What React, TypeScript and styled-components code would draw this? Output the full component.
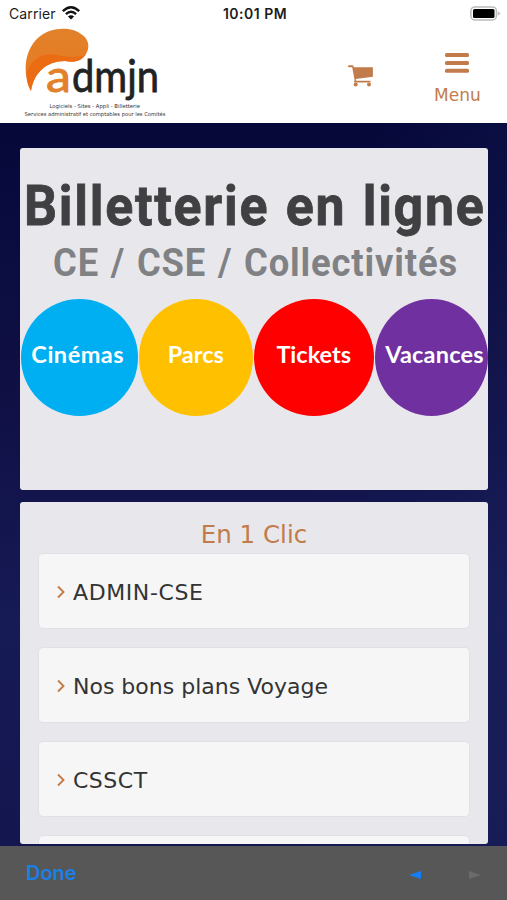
import React from "react";
import styled, { createGlobalStyle } from "styled-components";

const GlobalStyle = createGlobalStyle`
  * { box-sizing: border-box; }
  body { margin: 0; }
`;

const VERDANA = `Verdana, "DejaVu Sans", sans-serif`;
const SYSTEM = `Inter, "Liberation Sans", sans-serif`;
const ACCENT = "#c27c4b";

const Screen = styled.div`
  width: 507px;
  height: 900px;
  display: flex;
  flex-direction: column;
  overflow: hidden;
  font-family: ${VERDANA};
  background: linear-gradient(100deg, rgba(30, 40, 100, 0) 60%, rgba(30, 40, 100, 0.35)),
    linear-gradient(#06083a 120px, #101045 400px, #161a55 620px, #14164f 846px);
`;

const StatusBar = styled.div`
  flex: none;
  height: 28px;
  display: grid;
  grid-template-columns: 1fr auto 1fr;
  align-items: center;
  padding: 0 6px 2px 9px;
  background: #fff;
  font-family: ${SYSTEM};
  font-size: 14px;
  color: #1c1c1c;
`;

const Carrier = styled.div`
  display: flex;
  align-items: center;
  gap: 6px;
  letter-spacing: 0.1px;
`;

const Clock = styled.div`
  font-weight: 600;
  font-size: 14px;
  letter-spacing: 0.5px;
`;

const Battery = styled.div`
  display: flex;
  justify-content: flex-end;
`;

const Header = styled.header`
  flex: none;
  height: 95px;
  display: flex;
  background: #fff;
`;

const Logo = styled.svg`
  flex: none;
  margin-left: 20px;
`;

const CartLink = styled.div`
  margin: 37px 0 0 178px;
  height: 23px;
`;

const MenuButton = styled.div`
  margin: 25px 0 0 60px;
  display: flex;
  flex-direction: column;
  align-items: center;
  gap: 11px;
  color: ${ACCENT};
  font-size: 17px;
  line-height: 22px;
`;

const Content = styled.main`
  flex: none;
  height: 723px;
  padding: 25px 19px 2px 20px;
  display: flex;
  flex-direction: column;
  gap: 12px;
`;

const Panel = styled.section<{ $height: number }>`
  flex: none;
  height: ${(p) => p.$height}px;
  border-radius: 3px;
  background: #e8e8ec;
  overflow: hidden;
`;

const BannerTitle = styled.div`
  width: max-content;
  height: 52px;
  margin: 32px 0 0 4px;
  font: 700 56px/52px Roboto, sans-serif;
  letter-spacing: 1.9px;
  word-spacing: 2px;
  white-space: nowrap;
  color: #404042;
  -webkit-text-stroke: 0.8px #404042;
  transform: scaleX(0.925);
  transform-origin: left;
`;

const BannerSubtitle = styled.div`
  width: max-content;
  height: 40px;
  margin: 11px 0 0 32.5px;
  font: 700 38.5px/40px Roboto, sans-serif;
  letter-spacing: 0.9px;
  word-spacing: 2px;
  white-space: nowrap;
  color: #808184;
  transform: scaleX(0.945);
  transform-origin: left;
`;

const Themes = styled.div`
  display: flex;
  gap: 1px;
  margin: 16px 0 0 0.5px;
`;

const Theme = styled.div<{ $width: number; $color: string; $indent?: number; $tracking?: number }>`
  flex: none;
  width: ${(p) => p.$width}px;
  height: 117px;
  padding-bottom: 8px;
  text-indent: ${(p) => p.$indent ?? 0}px;
  letter-spacing: ${(p) => p.$tracking ?? 0}px;
  border-radius: 50%;
  display: flex;
  align-items: center;
  justify-content: center;
  background: ${(p) => p.$color};
  color: #fff;
  font: 700 23.5px/28px Lato, sans-serif;
  white-space: nowrap;
`;

const ListTitle = styled.h2`
  margin: 18px 0 4px;
  text-align: center;
  font-size: 24.5px;
  line-height: 29px;
  font-weight: 400;
  color: ${ACCENT};
`;

const Links = styled.div`
  display: flex;
  flex-direction: column;
  gap: 18px;
  padding: 0 18px;
`;

const LinkCard = styled.a<{ $tracking?: number }>`
  flex: none;
  height: 76px;
  display: flex;
  align-items: center;
  gap: 8px;
  padding: 2px 0 0 18px;
  border: 1px solid #dfe1e4;
  border-radius: 5px;
  background: #f6f6f6;
  font-size: 22px;
  letter-spacing: ${(p) => p.$tracking ?? 0}px;
  color: #333;
`;

const Toolbar = styled.footer`
  flex: none;
  height: 54px;
  display: flex;
  align-items: center;
  padding: 0 26px;
  background: #575757;
`;

const Done = styled.div`
  flex: 1;
  font: 600 20px/24px ${SYSTEM};
  color: #1a80e6;
`;

const Arrows = styled.div`
  display: flex;
  gap: 48px;
  padding-top: 4px;
`;

const Wifi = () => (
  <svg width="18" height="14" viewBox="0 0 18 14">
    <g fill="none" stroke="#111" strokeWidth="2.3">
      <path d="M0.8 5.2Q9-2.6 17.2 5.2" />
      <path d="M3.9 8.2Q9 3.4 14.1 8.2" />
    </g>
    <path d="M5.9 10.5Q9 7.8 12.1 10.5L9 13.6Z" fill="#111" />
  </svg>
);

const AdminLogo = () => (
  <Logo width="150" height="95" viewBox="20 28 150 95">
    <defs>
      <linearGradient id="leaf" x1="0" y1="0" x2="0" y2="1">
        <stop offset="0" stopColor="#e2812b" />
        <stop offset="1" stopColor="#e87a1f" />
      </linearGradient>
    </defs>
    <path d="M31 91C22 73 24 50 39 37C50 27 71 26 81 34C88 38 90 46 87 52C84 60 76 63 65 61C47 61 34 72 31 91Z" fill="url(#leaf)" />
    <path d="M31 91C27 84 26 78 27 71C33 58 44 52 57 55C70 58 81 57 85 55C81 61 75 63 65 61C47 61 34 72 31 91Z" fill="#ec6c14" />
    <g fontFamily="Lato, sans-serif" fontSize="44">
      <text x="46" y="92" fill="#e2812b" stroke="#e2812b" strokeWidth="0.9" textLength="25" lengthAdjust="spacingAndGlyphs">a</text>
      <text x="72" y="92" fill="#222" stroke="#222" strokeWidth="0.8" textLength="87" lengthAdjust="spacingAndGlyphs">dmjn</text>
    </g>
    <g fontFamily="DejaVu Sans, sans-serif" fontSize="5.4" fill="#333">
      <text x="49.500" y="108" textLength="90.500" lengthAdjust="spacingAndGlyphs">Logiciels - Sites - Appli - Billetterie</text>
      <text x="24.500" y="116" textLength="141" lengthAdjust="spacingAndGlyphs">Services administratif et comptables pour les Comités</text>
    </g>
  </Logo>
);

const Chevron = () => (
  <svg width="8" height="14" viewBox="0 0 8 14">
    <path d="M1 1.500L6.500 7L1 12.500" fill="none" stroke={ACCENT} strokeWidth="1.900" />
  </svg>
);

export default function App() {
  return (
    <Screen>
      <GlobalStyle />
      <StatusBar>
        <Carrier>Carrier<Wifi /></Carrier>
        <Clock>10:01 PM</Clock>
        <Battery>
          <svg width="31" height="15" viewBox="0 0 31 15">
            <rect x="0.900" y="0.900" width="25.500" height="13" rx="4" fill="#fff" stroke="#bbb" strokeWidth="1.500" />
            <rect x="3" y="3" width="21.500" height="9" rx="1.500" fill="#000" />
            <path d="M27.800 5L30.500 7.400L27.800 9.800Z" fill="#bbb" />
          </svg>
        </Battery>
      </StatusBar>
      <Header>
        <AdminLogo />
        <CartLink>
          <svg width="26" height="23" viewBox="0 0 26 23" fill={ACCENT}>
            <path d="M0 1.200Q0 0.300 1 0.300H4.600Q5.600 0.300 5.900 2.300H24.900V11.800L7.800 14L8 15.800H22.500V17.600H6.900Q5.900 17.600 6.200 16.200L6.600 14.900L4.200 2.200H1Q0 2.200 0 1.200Z" />
            <circle cx="7.700" cy="19.400" r="2" />
            <circle cx="21" cy="19.400" r="2" />
          </svg>
        </CartLink>
        <MenuButton>
          <svg width="24" height="20" viewBox="0 0 24 20" fill={ACCENT}>
            <rect y="0" width="24" height="4" rx="1.500" />
            <rect y="7.900" width="24" height="4" rx="1.500" />
            <rect y="15.700" width="24" height="4" rx="1.500" />
          </svg>
          Menu
        </MenuButton>
      </Header>
      <Content>
        <Panel $height={342}>
          <BannerTitle>Billetterie en ligne</BannerTitle>
          <BannerSubtitle>CE / CSE / Collectivités</BannerSubtitle>
          <Themes>
            <Theme $width={117.5} $color="#00aff1" $indent={-3} $tracking={0.5}>Cinémas</Theme>
            <Theme $width={113.5} $color="#ffc000">Parcs</Theme>
            <Theme $width={120.5} $color="#ff0000">Tickets</Theme>
            <Theme $width={113} $color="#7030a0" $indent={6} $tracking={0.2}>Vacances</Theme>
          </Themes>
        </Panel>
        <Panel $height={342}>
          <ListTitle>En 1 Clic</ListTitle>
          <Links>
            <LinkCard $tracking={0.6}><Chevron />ADMIN-CSE</LinkCard>
            <LinkCard><Chevron />Nos bons plans Voyage</LinkCard>
            <LinkCard $tracking={0.5}><Chevron />CSSCT</LinkCard>
            <LinkCard />
          </Links>
        </Panel>
      </Content>
      <Toolbar>
        <Done>Done</Done>
        <Arrows>
          <svg width="12" height="8" viewBox="0 0 12 8"><path d="M0 4L12 0V8Z" fill="#147ff5" /></svg>
          <svg width="12" height="8" viewBox="0 0 12 8"><path d="M12 4L0 0V8Z" fill="#6b6b6b" /></svg>
        </Arrows>
      </Toolbar>
    </Screen>
  );
}
